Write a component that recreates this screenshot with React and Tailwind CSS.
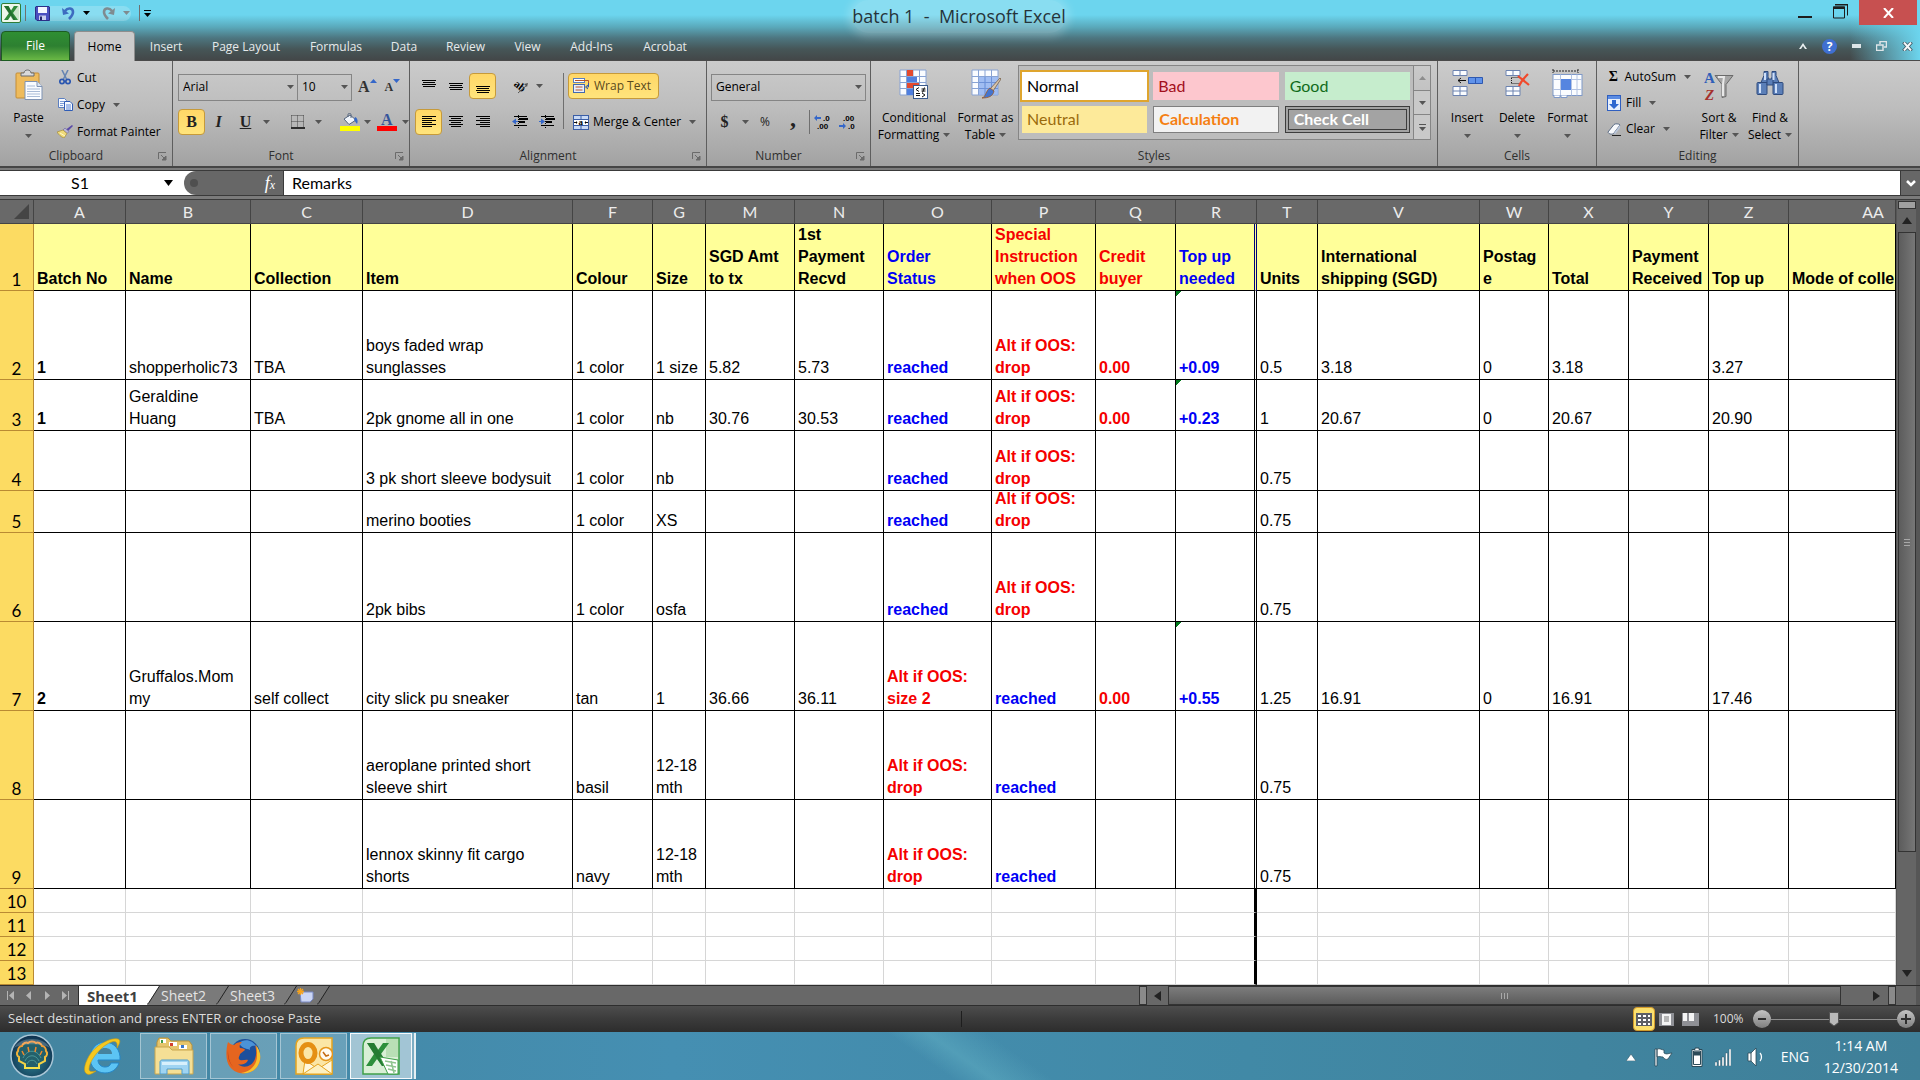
import React from "react";

const UI = "font-['Open_Sans','Noto_Sans',sans-serif]";

/* ---------- small shared pieces ---------- */

function Arrow({ className = "" }) {
  return (
    <svg width="7" height="4" viewBox="0 0 7 4" className={"shrink-0 " + className} aria-hidden="true">
      <path d="M0 0h7L3.500 4z" fill="currentColor" />
    </svg>
  );
}

function Sep({ className = "h-6" }) {
  return <div className={"w-px shrink-0 bg-[#6f6f6f] " + className} />;
}

function Group({ label, width, launcher, children }) {
  return (
    <section className={"flex shrink-0 flex-col border-r border-[#5e5e5e] " + width} aria-label={label}>
      <div className="flex h-[85px] min-w-0">{children}</div>
      <div className="flex h-5 items-center">
        <span className="flex-1 text-center text-xs text-[#2f2f2f]">{label}</span>
        {launcher && (
          <button aria-label={label + " settings"} className="flex w-5 justify-center text-[#6b6b6b]">
            <svg width="9" height="9" viewBox="0 0 9 9" aria-hidden="true">
              <path d="M.5 7V.5H8" stroke="currentColor" fill="none" />
              <path d="M3 3l5 5M8 4v4H4z" stroke="currentColor" fill="currentColor" />
            </svg>
          </button>
        )}
      </div>
    </section>
  );
}

function BigButton({ icon, lines, width, inlineArrow }) {
  return (
    <button className={"flex shrink-0 flex-col items-center pt-2 text-xs text-black " + width}>
      <span className="flex h-9 items-start justify-center">{icon}</span>
      <span className="mt-1 h-[17px] leading-[17px] whitespace-nowrap">{lines[0]}</span>
      {inlineArrow ? (
        <span className="flex h-[17px] items-center gap-1 leading-[17px] whitespace-nowrap">
          {lines[1]}
          <Arrow className="text-[#555]" />
        </span>
      ) : (
        <Arrow className="mt-2 text-[#555]" />
      )}
    </button>
  );
}

function SmallButton({ icon, label, arrow, className = "" }) {
  return (
    <button className={"flex items-center text-xs whitespace-nowrap text-black " + className}>
      <span className="mr-1 flex w-4 justify-center">{icon}</span>
      {label}
      {arrow && <Arrow className="ml-2 text-[#555]" />}
    </button>
  );
}

function IconButton({ label, active, width = "w-[27px]", children }) {
  return (
    <button
      aria-label={label}
      className={
        "flex h-[26px] shrink-0 items-center justify-center rounded-sm " +
        width +
        (active ? " border border-[#c69a3a] bg-[linear-gradient(#ffd767,#ffe47c)]" : "")
      }
    >
      {children}
    </button>
  );
}

function Combo({ label, value, width }) {
  return (
    <div className={"relative h-[27px] shrink-0 " + width}>
      <select
        aria-label={label}
        defaultValue={value}
        className="h-full w-full appearance-none border border-[#858585] bg-transparent px-1 text-xs text-black"
      >
        <option>{value}</option>
      </select>
      <Arrow className="pointer-events-none absolute top-3 right-1 text-[#555]" />
    </div>
  );
}

/* ---------- icons ---------- */

const ExcelMark = () => (
  <svg width="20" height="20" viewBox="0 0 20 20" aria-hidden="true">
    <rect x=".5" y=".5" width="19" height="19" rx="1.5" fill="#eef7ec" stroke="#2f7d38" />
    <path d="M12 3h6v14h-6z" fill="#cfe6cd" />
    <path d="M3 3h4.500l2.500 4.500L13 3h4l-5 7 5 7h-4.500L10 12.500 7 17H3l5-7z" fill="#2f8a3a" />
    <path d="M3 3h4.500l7 14H12z" fill="#1c5e28" opacity=".6" />
  </svg>
);
const SaveIcon = () => (
  <svg width="15" height="15" viewBox="0 0 15 15" aria-hidden="true">
    <path d="M1 .5h13l.5.5v13.500H2L.5 13V1z" fill="#4a4fc0" stroke="#2c2f86" />
    <path d="M3 1h9v6H3z" fill="#f4f6ff" />
    <path d="M4 9.500h7V14H4z" fill="#c9cdee" />
    <path d="M5 10.500h2V14H5z" fill="#23256b" />
  </svg>
);
const UndoIcon = ({ color, flip }) => (
  <svg width="13" height="14" viewBox="0 0 13 14" className={flip ? "-scale-x-100" : ""} aria-hidden="true">
    <path d="M3 5c3-4 8-3 8 1 0 3-2 5-4 7" fill="none" stroke={color} strokeWidth="2.600" />
    <path d="M0 2l1 7 6-1.500z" fill={color} />
  </svg>
);
const PasteIcon = () => (
  <svg width="28" height="32" viewBox="0 0 28 32" aria-hidden="true">
    <rect x="1" y="4" width="23" height="25" rx="1" fill="#eebb5c" stroke="#c38d37" />
    <path d="M6 7V4h3c0-4 7-4 7 0h3v3z" fill="#d9d9d9" stroke="#6b6b6b" />
    <path d="M10 12.500h12l5 5V30.500H10z" fill="#fafcff" stroke="#7f93b3" />
    <path d="M22 12.500v5h5" fill="#dbe5f3" stroke="#7f93b3" />
    <path d="M12 17h8M12 20h13M12 22.500h13M12 25h13M12 27.500h13" stroke="#a9bbd6" />
  </svg>
);
const CutIcon = () => (
  <svg width="12" height="15" viewBox="0 0 12 15" aria-hidden="true">
    <path d="M3 0l4.500 9M9 0L4.500 9" stroke="#6785b3" strokeWidth="1.600" />
    <circle cx="3" cy="11.500" r="2.200" fill="none" stroke="#2a56b0" strokeWidth="1.700" />
    <circle cx="9" cy="11.500" r="2.200" fill="none" stroke="#2a56b0" strokeWidth="1.700" />
  </svg>
);
const CopyIcon = () => (
  <svg width="15" height="13" viewBox="0 0 15 13" aria-hidden="true">
    <path d="M.5.5h6l2 2v7h-8z" fill="#f5f9ff" stroke="#5c7fc0" />
    <path d="M2 3.500h4M2 5.500h4M2 7.500h3" stroke="#7d9ed8" />
    <path d="M6.500 3.500h5.500l2.500 2.500v6.500h-8z" fill="#f5f9ff" stroke="#2f5cb5" />
    <path d="M8 7h5M8 9h5M8 11h5" stroke="#5c86d6" />
  </svg>
);
const BrushIcon = () => (
  <svg width="16" height="13" viewBox="0 0 16 13" aria-hidden="true">
    <path d="M15 0l1 1-5 5-2-1.500z" fill="#5a4aa8" />
    <path d="M8 3l4 3.500-2 2L6 5z" fill="#b9b6d8" stroke="#66609a" strokeWidth=".6" />
    <path d="M6 5l4 3.500L7 13C4 12 1.500 9.500 0 7z" fill="#f0db7a" stroke="#a48b3a" strokeWidth=".7" />
    <path d="M3 8l5 3" stroke="#fff8d0" />
  </svg>
);
const Lines = ({ rows }) => (
  <svg width="14" height="14" viewBox="0 0 14 14" aria-hidden="true">
    {rows.map(([x, y, w]) => (
      <rect key={y} x={x} y={y} width={w} height="1" fill="#000" />
    ))}
  </svg>
);
const vTop = [[0, 1, 14], [1, 3, 12], [0, 5, 14], [1, 7, 12]];
const vMid = [[0, 4, 14], [1, 6, 12], [0, 8, 14], [1, 10, 12]];
const vBot = [[0, 7, 14], [1, 9, 12], [0, 11, 14], [1, 13, 12]];
const aLeft = [[0, 1, 14], [0, 3, 10], [0, 5, 14], [0, 7, 10], [0, 9, 14], [0, 11, 10]];
const aMid = [[0, 1, 14], [2, 3, 10], [0, 5, 14], [2, 7, 10], [0, 9, 14], [2, 11, 10]];
const aRight = [[0, 1, 14], [4, 3, 10], [0, 5, 14], [4, 7, 10], [0, 9, 14], [4, 11, 10]];

const IndentIcon = ({ right }) => (
  <svg width="16" height="14" viewBox="0 0 16 14" aria-hidden="true">
    <path d="M2 1.500h13M7 4.500h9M7 7.500h6M2 10.500h13" stroke="#000" />
    <path d="M7 3.500h9M7 6.500h6" stroke="#000" />
    <path d="M6.500 0v14" stroke="#000" strokeDasharray="1 1" />
    {right ? <path d="M0 6h2V3.500L6 6.500 2 9.500V7H0z" fill="#3567c9" /> : <path d="M6 6H4V3.500L0 6.500 4 9.500V7h2z" fill="#3567c9" />}
  </svg>
);
const OrientIcon = () => (
  <svg width="17" height="15" viewBox="0 0 17 15" className="overflow-visible" aria-hidden="true">
    <text x="1" y="9" transform="rotate(38 5 8)" fontSize="11" fontWeight="bold" fontFamily="Liberation Serif, serif">ab</text>
    <path d="M6 14l9-8" stroke="#555" />
    <path d="M16 4l-4 1 3 3z" fill="#555" />
  </svg>
);
const WrapIcon = () => (
  <svg width="17" height="16" viewBox="0 0 17 16" aria-hidden="true">
    <rect x=".5" y=".5" width="11" height="4" fill="#fff" stroke="#5b7fc0" />
    <path d="M2 2.500h13.500v5" stroke="#b5552a" fill="none" />
    <path d="M15.500 5v4h-2M15 7l-2.500 2L15 11" stroke="#2d57a8" fill="none" />
    <rect x=".5" y="6.500" width="11" height="8" fill="#e8effb" stroke="#4469ad" />
    <path d="M2.500 9h7M2.500 12h7" stroke="#b5552a" />
  </svg>
);
const MergeIcon = () => (
  <svg width="16" height="15" viewBox="0 0 16 15" aria-hidden="true">
    <rect x=".5" y=".5" width="15" height="14" fill="#c9daf5" stroke="#3a5ea6" />
    <path d="M0 4.500h16M0 10.500h16M8 0v4M8 11v4" stroke="#3a5ea6" />
    <rect x="1" y="5" width="14" height="5" fill="#fff" />
    <text x="5.500" y="10" fontSize="9" fontWeight="bold" fontFamily="Liberation Serif, serif">a</text>
    <path d="M1 7.500h3M12 7.500h3" stroke="#111" />
    <path d="M4.500 7.500L3 6v3zM11.500 7.500L13 6v3z" />
  </svg>
);
const BorderIcon = () => (
  <svg width="14" height="14" viewBox="0 0 14 14" aria-hidden="true">
    <path d="M.5.500h12.500M.5 6.500h12.500M.5.500v12M6.500.500v12M12.500.500v12" stroke="#444" strokeDasharray="1 1" />
    <path d="M0 13h14" stroke="#000" strokeWidth="1.500" />
  </svg>
);
const FillIcon = () => (
  <svg width="20" height="18" viewBox="0 0 20 18" aria-hidden="true">
    <path d="M4 6l6-4 6 5-7 4.500z" fill="#f1f5fb" stroke="#54657e" />
    <path d="M8 4V1.500c0-1.500 3-1.500 3 0V5" fill="none" stroke="#54657e" />
    <path d="M15 4c3 1 3 5 2 7-1-1-2-3-3-4z" fill="#3768c4" />
    <rect y="13" width="20" height="5" fill="#ff0" />
  </svg>
);
const FontColorIcon = () => (
  <svg width="20" height="20" viewBox="0 -2 20 20" className="mb-0.5" aria-hidden="true">
    <text x="4" y="12" fontSize="16" fontWeight="bold" fill="#36559b" fontFamily="Liberation Serif, serif">A</text>
    <rect y="13" width="20" height="5" fill="#f00" />
  </svg>
);
const DecimalIcon = ({ up }) => (
  <svg width="17" height="15" viewBox="0 0 17 15" aria-hidden="true">
    <g fontSize="8" fontWeight="bold" fontFamily="Liberation Sans, sans-serif">
      <text x={up ? 9 : 4} y="6">{up ? ".0" : ".00"}</text>
      <text x={up ? 3 : 9} y="14">{up ? ".00" : ".0"}</text>
    </g>
    {up ? <path d="M0 3l3-3v2h4v2H3v2z" fill="#3567c9" /> : <path d="M7 11l-3-3v2H0v2h4v2z" fill="#3567c9" />}
  </svg>
);
const GridBase = ({ fill }) => (
  <>
    <rect x="1" y="1" width="26" height="25" fill={fill} />
    <path d="M1 1h26v25H1zM7.500 1v25M14 1v25M20.500 1v25M1 7.500h26M1 13.500h26M1 19.500h26" fill="none" stroke="#88a3d4" />
  </>
);
const CondIcon = () => (
  <svg width="30" height="30" viewBox="0 0 30 30" aria-hidden="true">
    <GridBase fill="#fafcff" />
    <path d="M8 1h6v6H8zM8 14h12v5H8z" fill="#e3492f" />
    <path d="M8 8h10v5H8zM8 20h6v6H8z" fill="#4f7fe0" />
    <rect x="14.500" y="16.500" width="14" height="13" fill="#fff" stroke="#3a5a8c" />
    <path d="M20 18.500l-3 2 3 2M17 24.500h4M17 26.500h4M22.500 20h4M22.500 22h4M25.500 18.500l-2 5M23 24l3 2-3 2" stroke="#111" fill="none" />
  </svg>
);
const TableIcon = () => (
  <svg width="30" height="30" viewBox="0 0 30 30" aria-hidden="true">
    <GridBase fill="#fafcff" />
    <path d="M8 8h19v18H8z" fill="#8fb2f0" opacity=".85" />
    <path d="M14 8v18M20.500 8v18M8 13.500h19M8 19.500h19" stroke="#6d92d8" />
    <path d="M29 9l1 1-8 12-3-2z" fill="#d8c6ae" stroke="#6b5238" strokeWidth=".7" />
    <path d="M19 19l4 3c-1 5-5 7-12 7 4-1 4-8 8-10z" fill="#4374cf" stroke="#a0581e" strokeWidth=".8" />
  </svg>
);
const InsertIcon = () => (
  <svg width="31" height="28" viewBox="0 0 31 28" aria-hidden="true">
    <path d="M1 1.500h14v5H1zM8 1.500v5M1 17.500h14v9H1zM8 17.500v9M1 22h14" fill="#fbfdff" stroke="#6c83b0" />
    <path d="M16.500 8.500h14v6h-14zM23.500 8.500v6" fill="#5f92ea" stroke="#2e58b0" />
    <path d="M6 11.500h8M9 9l-3 2.500L9 14" stroke="#111" fill="none" />
  </svg>
);
const DeleteIcon = () => (
  <svg width="25" height="28" viewBox="0 0 25 28" aria-hidden="true">
    <path d="M1 1.500h14v5H1zM8 1.500v5M1 17.500h14v9H1zM8 17.500v9M1 22h14" fill="#fbfdff" stroke="#6c83b0" />
    <path d="M6.500 8.500H15M6.500 14.500H15M6.500 9v5" stroke="#222" strokeDasharray="1 1" fill="none" />
    <path d="M13 7l11 9M23 5C19 9 16 12 14 17" stroke="#f0492c" strokeWidth="2.200" fill="none" />
  </svg>
);
const FormatIcon = () => (
  <svg width="31" height="30" viewBox="0 0 31 30" aria-hidden="true">
    <path d="M1 2h25M1 0v4M26 0v4" stroke="#222" strokeDasharray="2 1" />
    <rect x="1" y="5.500" width="29" height="21" fill="#fbfdff" stroke="#7f99c8" />
    <path d="M8.500 5.500v21M19.500 5.500v21M25 5.500v21M1 10.500h29M1 20.500h29" stroke="#b4c4e2" />
    <rect x="9" y="10" width="10" height="11" fill="#5585e0" />
    <path d="M2 26.500v2h6v-2M9 26.500v2h6v-2" stroke="#7f99c8" fill="#fff" />
  </svg>
);
const FillDownIcon = () => (
  <svg width="14" height="16" viewBox="0 0 14 16" aria-hidden="true">
    <rect x=".5" y=".5" width="13" height="15" fill="#e6effd" stroke="#2f5fc0" />
    <rect x="1" y="1" width="12" height="3" fill="#5a8be2" />
    <path d="M5 5h4v4h3l-5 5-5-5h3z" fill="#2e67cf" />
  </svg>
);
const EraserIcon = () => (
  <svg width="15" height="13" viewBox="0 0 15 13" aria-hidden="true">
    <path d="M1 9l6-7.500c1-1 5-1 6 .5L7 10c-1 2-6 1-6-1z" fill="#f7f9fc" stroke="#5b6c85" />
    <path d="M7 10l6-8v3L8 11.500z" fill="#b9c6da" />
    <path d="M5 12.500h9" stroke="#222" />
  </svg>
);
const SortIcon = () => (
  <svg width="30" height="36" viewBox="0 0 30 36" aria-hidden="true">
    <g fontSize="15" fontWeight="bold" fontFamily="Liberation Serif, serif">
      <text x="0" y="14" fill="#2f5fb8">A</text>
      <text x="1" y="31" fill="#a5302c" fontStyle="italic">Z</text>
    </g>
    <path d="M11 6.500h18l-7 9v12l-4 1V15.500z" fill="#a5a5a5" stroke="#6a6a6a" />
    <path d="M14 8h6l-1 7v12" fill="none" stroke="#e8e8e8" strokeWidth="2" />
  </svg>
);
const FindIcon = () => (
  <svg width="28" height="28" viewBox="0 0 28 28" aria-hidden="true">
    <g fill="#5b7fb8" stroke="#2e4a7d">
      <path d="M8 2.500h4v5l1 6H5l3-7z" />
      <path d="M16 2.500h4v4l3 7h-8l1-6z" />
      <rect x="1" y="13.500" width="10" height="12" rx="1" />
      <rect x="17" y="13.500" width="10" height="12" rx="1" />
      <path d="M11 10h6v6h-6z" />
    </g>
    <path d="M4 15v9M20 15v9M9 4v7M17.500 4v7" stroke="#cfe0fa" strokeWidth="2" />
  </svg>
);

/* ---------- title bar + tabs ---------- */

function TitleBar() {
  const tabs = [
    ["Insert", "w-[62px]"],
    ["Page Layout", "w-[98px]"],
    ["Formulas", "w-[82px]"],
    ["Data", "w-[54px]"],
    ["Review", "w-[69px]"],
    ["View", "w-[55px]"],
    ["Add-Ins", "w-[73px]"],
    ["Acrobat", "w-[74px]"],
  ];
  return (
    <header className="h-[61px] shrink-0 border-b border-[#4a4a4a] bg-[linear-gradient(to_right,transparent_calc(100%-70px),#6cd5ee_100%),linear-gradient(#6cd5ee_0,#6cd5ee_15px,#5aa9bb_27px,#4d7680_38px,#465658_49px,#434748_60px)]">
      <div className="flex h-[30px] items-start justify-between">
        <div className="flex h-[26px] flex-1 items-center pl-px">
          <ExcelMark />
          <Sep className="ml-1 h-4" />
          <div className="ml-2 flex items-center rounded-full bg-white/20 px-px">
            <button aria-label="Save"><SaveIcon /></button>
            <button aria-label="Undo" className="ml-3"><UndoIcon color="#3d6cc0" /></button>
            <Arrow className="ml-2 text-black" />
            <button aria-label="Redo" className="ml-3"><UndoIcon color="#7f8b90" flip /></button>
            <Arrow className="ml-2 text-[#7f8b90]" />
          </div>
          <Sep className="ml-2 h-4" />
          <button aria-label="Customize toolbar" className="ml-1">
            <svg width="7" height="7" viewBox="0 0 7 7" aria-hidden="true">
              <path d="M0 0h7v1H0zM0 3h7L3.500 7z" />
            </svg>
          </button>
        </div>
        <h1 className="rounded-full bg-white/20 text-lg leading-[33px] whitespace-pre text-[#26343a] shadow-[0_0_8px_4px_rgba(255,255,255,0.2)]">
          batch 1  -  Microsoft Excel
        </h1>
        <div className="flex flex-1 justify-end pr-[3px]">
          <button aria-label="Minimize" className="flex h-[25px] w-8 justify-center pt-4">
            <span className="h-0.5 w-[14px] bg-[#1d1d1d]" />
          </button>
          <button aria-label="Restore" className="flex h-[25px] w-[38px] justify-center pt-1">
            <svg width="15" height="15" viewBox="0 0 15 15" aria-hidden="true">
              <path d="M2.500.500h12v11M.5 3h11v11H.5z" fill="none" stroke="#1d1d1d" />
              <path d="M2 0h13v1.500H2zM0 2.500h12V5H0z" fill="#1d1d1d" />
            </svg>
          </button>
          <button aria-label="Close" className="flex h-[25px] w-[58px] items-center justify-center bg-[#c75050]">
            <svg width="11" height="10" viewBox="0 0 11 10" aria-hidden="true">
              <path d="M1 0l9 10M10 0L1 10" stroke="#fff" strokeWidth="2" />
            </svg>
          </button>
        </div>
      </div>
      <nav className="flex h-[31px] items-end text-xs text-[#e6eaeb]">
        <button className="mr-1 ml-px h-[30px] w-[69px] rounded-t-sm border border-[#1c5c22] bg-[linear-gradient(#2f8f33,#2d8031_50%,#6ab845)] text-white">
          File
        </button>
        <button className="h-[30px] w-[61px] rounded-t-sm border border-b-0 border-[#8e8e8e] bg-[#cbcbcb] text-black">Home</button>
        {tabs.map(([t, w]) => (
          <button key={t} className={"h-[29px] whitespace-nowrap " + w}>{t}</button>
        ))}
        <div className="flex h-[30px] flex-1 items-center justify-end gap-[15px] pr-[7px]">
          <button aria-label="Collapse ribbon">
            <svg width="8" height="6" viewBox="0 0 8 6" aria-hidden="true"><path d="M0 6l4-6 4 6H6L4 3 2 6z" fill="#e8eef0" /></svg>
          </button>
          <button aria-label="Help" className="h-[15px] w-[15px] rounded-full bg-[#3f6fd1] text-xs leading-[15px] font-bold text-white">?</button>
          <button aria-label="Minimize workbook" className="h-1 w-[9px] bg-[#dde5e8]" />
          <button aria-label="Restore workbook">
            <svg width="11" height="10" viewBox="0 0 11 10" aria-hidden="true">
              <path d="M4 .5h6.500V6H8M4 0v3M.5 4H7v5.500H.5z" fill="none" stroke="#dde5e8" strokeWidth="1.500" />
            </svg>
          </button>
          <button aria-label="Close workbook">
            <svg width="11" height="9" viewBox="0 0 11 9" aria-hidden="true">
              <path d="M1.500 0l8 9M9.500 0l-8 9" stroke="#3f5560" strokeWidth="3.500" />
              <path d="M2 .5l7 8M9 .5l-7 8" stroke="#f4f8fa" strokeWidth="2" />
            </svg>
          </button>
        </div>
      </nav>
    </header>
  );
}

/* ---------- ribbon ---------- */

const STYLE_CELLS = [
  ["Normal", "bg-white text-black outline-2 outline-[#dfa52e]"],
  ["Bad", "bg-[#fdc7ce] text-[#a3101c]"],
  ["Good", "bg-[#c6edcd] text-[#116b1b]"],
  ["Neutral", "bg-[#fdea9a] text-[#9a6a0c]"],
  ["Calculation", "border border-[#7f7f7f] bg-[#f2f2f2] font-bold text-[#f57f11]"],
  ["Check Cell", "border-4 border-double border-[#3d3d3d] bg-[#a3a3a3] px-[2px] font-bold text-white"],
];

function Ribbon() {
  return (
    <div className="flex h-[107px] shrink-0 border-b-2 border-[#454545] bg-[linear-gradient(#cbcbcb,#bdbdbd_45%,#a2a2a2)]">
      <Group label="Clipboard" width="w-[173px]" launcher>
        <BigButton width="w-[57px]" icon={<PasteIcon />} lines={["Paste"]} />
        <div className="flex flex-col pt-[3px]">
          <SmallButton className="h-[27px]" icon={<CutIcon />} label="Cut" />
          <SmallButton className="h-[27px]" icon={<CopyIcon />} label="Copy" arrow />
          <SmallButton className="h-[27px]" icon={<BrushIcon />} label="Format Painter" />
        </div>
      </Group>

      <Group label="Font" width="w-[237px]" launcher>
        <div className="flex flex-col gap-[9px] pt-3 pl-[5px]">
          <div className="flex items-center">
            <Combo label="Font" value="Arial" width="w-[120px]" />
            <Combo label="Font size" value="10" width="-ml-px w-[55px]" />
            <button aria-label="Grow font" className="ml-1.5 flex items-start font-['Liberation_Serif',serif] text-base leading-6 font-bold text-[#333]">
              A<Arrow className="mt-1 rotate-180 text-[#3567c9]" />
            </button>
            <button aria-label="Shrink font" className="ml-2 flex items-start font-['Liberation_Serif',serif] text-xs leading-6 font-bold text-[#333]">
              A<Arrow className="mt-1 text-[#3567c9]" />
            </button>
          </div>
          <div className="flex items-center font-['Liberation_Serif',serif] text-base font-bold text-[#222]">
            <IconButton label="Bold" active>B</IconButton>
            <IconButton label="Italic"><span className="italic">I</span></IconButton>
            <IconButton label="Underline"><span className="underline">U</span></IconButton>
            <Arrow className="ml-1 text-[#555]" />
            <Sep className="ml-2" />
            <IconButton label="Borders" width="ml-1 w-[30px]"><BorderIcon /></IconButton>
            <Arrow className="ml-0.5 text-[#555]" />
            <Sep className="ml-2" />
            <IconButton label="Fill color" width="ml-1 w-[29px]"><FillIcon /></IconButton>
            <Arrow className="text-[#555]" />
            <IconButton label="Font color" width="w-[31px]"><FontColorIcon /></IconButton>
            <Arrow className="text-[#555]" />
          </div>
        </div>
      </Group>

      <Group label="Alignment" width="w-[297px]" launcher>
        <div className="flex flex-col gap-[10px] pt-3 pl-[5px]">
          <div className="flex items-center">
            <IconButton label="Top align"><Lines rows={vTop} /></IconButton>
            <IconButton label="Middle align"><Lines rows={vMid} /></IconButton>
            <IconButton label="Bottom align" active><Lines rows={vBot} /></IconButton>
            <Sep className="ml-1" />
            <IconButton label="Orientation" width="ml-1 w-[31px]"><OrientIcon /></IconButton>
            <Arrow className="text-[#555]" />
          </div>
          <div className="flex items-center">
            <IconButton label="Align left" active><Lines rows={aLeft} /></IconButton>
            <IconButton label="Align center"><Lines rows={aMid} /></IconButton>
            <IconButton label="Align right"><Lines rows={aRight} /></IconButton>
            <Sep className="ml-1" />
            <IconButton label="Decrease indent" width="ml-1 w-[30px]"><IndentIcon /></IconButton>
            <IconButton label="Increase indent" width="w-6"><IndentIcon right /></IconButton>
          </div>
        </div>
        <Sep className="mt-3 ml-1 h-14" />
        <div className="flex flex-col gap-[10px] pt-3 pl-1">
          <button className="flex h-[26px] w-[91px] items-center rounded-sm border border-[#c69a3a] bg-[linear-gradient(#ffd767,#ffe47c)] pl-1 text-xs whitespace-nowrap text-[#5a4a1c]">
            <WrapIcon />
            <span className="ml-1">Wrap Text</span>
          </button>
          <button className="flex h-[26px] items-center pl-[5px] text-xs whitespace-nowrap text-black">
            <MergeIcon />
            <span className="ml-1">Merge &amp; Center</span>
            <Arrow className="ml-2 text-[#555]" />
          </button>
        </div>
      </Group>

      <Group label="Number" width="w-[164px]" launcher>
        <div className="flex flex-col gap-[9px] pt-3 pl-1">
          <Combo label="Number format" value="General" width="w-[155px]" />
          <div className="flex items-center text-[#222]">
            <IconButton label="Currency"><span className="font-['Liberation_Serif',serif] text-base font-bold">$</span></IconButton>
            <Arrow className="ml-1 text-[#555]" />
            <IconButton label="Percent" width="ml-1 w-6"><span className="text-xs">%</span></IconButton>
            <IconButton label="Comma" width="w-8"><span className="pb-2 font-['Liberation_Serif',serif] text-2xl leading-4 font-bold">,</span></IconButton>
            <Sep />
            <IconButton label="Increase decimal" width="ml-1"><DecimalIcon up /></IconButton>
            <IconButton label="Decrease decimal" width="ml-2"><DecimalIcon /></IconButton>
          </div>
        </div>
      </Group>

      <Group label="Styles" width="w-[567px]">
        <BigButton width="w-[86px]" icon={<CondIcon />} lines={["Conditional", "Formatting"]} inlineArrow />
        <BigButton width="w-[57px]" icon={<TableIcon />} lines={["Format as", "Table"]} inlineArrow />
        <div className="mt-1 ml-1 flex h-[75px]">
          <div className="grid w-[396px] grid-cols-3 grid-rows-2 gap-x-[6px] gap-y-[6px] border border-[#858585] bg-[#bdbdbd] px-[3px] py-[6px]">
            {STYLE_CELLS.map(([name, cls]) => (
              <button key={name} className={"flex items-center px-[5px] font-['Lato','Open_Sans',sans-serif] text-base " + cls}>{name}</button>
            ))}
          </div>
          <div className="flex w-[17px] flex-col border border-l-0 border-[#858585] text-[#555]">
            <button aria-label="Scroll styles up" className="flex flex-1 items-center justify-center text-[#8d8d8d]"><Arrow className="rotate-180" /></button>
            <button aria-label="Scroll styles down" className="flex flex-1 items-center justify-center border-t border-[#858585] bg-[#c9c9c9]"><Arrow /></button>
            <button aria-label="More styles" className="flex flex-1 flex-col items-center justify-center gap-0.5 border-t border-[#858585] bg-[#c9c9c9]">
              <span className="h-px w-[7px] bg-[#555]" />
              <Arrow />
            </button>
          </div>
        </div>
      </Group>

      <Group label="Cells" width="w-[159px]">
        <div className="flex pl-1">
          <BigButton width="w-[50px]" icon={<InsertIcon />} lines={["Insert"]} />
          <BigButton width="w-[50px]" icon={<DeleteIcon />} lines={["Delete"]} />
          <BigButton width="w-[51px]" icon={<FormatIcon />} lines={["Format"]} />
        </div>
      </Group>

      <Group label="Editing" width="w-[202px]">
        <div className="flex w-[94px] flex-col pt-[3px] pl-[9px]">
          <SmallButton className="h-[26px]" icon={<span className="font-['Liberation_Serif',serif] text-sm font-bold">Σ</span>} label="AutoSum" arrow />
          <SmallButton className="h-[26px]" icon={<FillDownIcon />} label="Fill" arrow />
          <SmallButton className="h-[26px]" icon={<EraserIcon />} label="Clear" arrow />
        </div>
        <BigButton width="w-[56px]" icon={<SortIcon />} lines={["Sort &", "Filter"]} inlineArrow />
        <BigButton width="w-[46px]" icon={<FindIcon />} lines={["Find &", "Select"]} inlineArrow />
      </Group>
    </div>
  );
}

function FormulaBar() {
  return (
    <div className="flex h-8 shrink-0 flex-col bg-[#7b7b7b] pt-0.5 text-base">
      <div className="flex h-[26px] border-y border-[#3a3a3a] bg-[#676767] font-['Lato','Open_Sans',sans-serif]">
        <div className="flex w-[184px] items-center bg-white pr-2">
          <input aria-label="Name box" defaultValue="S1" className="w-[160px] min-w-0 bg-transparent text-center text-black outline-none" />
          <svg width="9" height="6" viewBox="0 0 9 6" className="ml-1" aria-hidden="true"><path d="M0 0h9L4.500 6z" /></svg>
        </div>
        <div className="flex w-[99px] bg-white">
          <div className="flex w-full items-center justify-between rounded-l-full bg-[#676767] pr-2 pl-1.5">
            <span className="h-2 w-2 rounded-full bg-[#4f4f4f]" />
            <button aria-label="Insert function" className="font-['Liberation_Serif',serif] text-lg leading-5 text-white italic">
              f<span className="text-xs">x</span>
            </button>
          </div>
        </div>
        <input aria-label="Formula" defaultValue="Remarks" className="min-w-0 flex-1 border-l border-[#3a3a3a] bg-white px-2 text-black outline-none" />
        <button aria-label="Expand formula bar" className="flex w-5 items-center justify-center border-l border-[#3a3a3a]">
          <svg width="10" height="7" viewBox="0 0 10 7" aria-hidden="true"><path d="M1 1l4 4 4-4" fill="none" stroke="#fff" strokeWidth="2.500" /></svg>
        </button>
      </div>
      <div className="mt-[3px] h-px bg-[#3a3a3a]" />
    </div>
  );
}

/* ---------- worksheet ---------- */

const COLS = [
  ["A", "w-[92px]"], ["B", "w-[125px]"], ["C", "w-[112px]"], ["D", "w-[210px]"], ["F", "w-[80px]"],
  ["G", "w-[53px]"], ["M", "w-[89px]"], ["N", "w-[89px]"], ["O", "w-[108px]"], ["P", "w-[104px]"],
  ["Q", "w-[80px]"], ["R", "w-[81px]"], ["T", "w-[61px]"], ["V", "w-[162px]"], ["W", "w-[69px]"],
  ["X", "w-[80px]"], ["Y", "w-[80px]"], ["Z", "w-[80px]"], ["AA", ""],
];

const K = "text-black";
const BLUE = "font-bold text-[#0000f5]";
const RED = "font-bold text-[#f50000]";
const DROP = ["Alt if OOS:\ndrop", RED];
const OK = ["reached", BLUE];

const ROWS = [
  {
    h: "h-[66px]",
    head: true,
    cells: {
      A: ["Batch No", K], B: ["Name", K], C: ["Collection", K], D: ["Item", K], F: ["Colour", K], G: ["Size", K],
      M: ["SGD Amt\nto tx", K], N: ["1st\nPayment\nRecvd", K], O: ["Order\nStatus", BLUE],
      P: ["Special\nInstruction\nwhen OOS", RED], Q: ["Credit\nbuyer", RED], R: ["Top up\nneeded", BLUE],
      T: ["Units", K], V: ["International\nshipping (SGD)", K], W: ["Postag\ne", K], X: ["Total", K],
      Y: ["Payment\nReceived", K], Z: ["Top up", K], AA: ["Mode of colle", K],
    },
  },
  {
    h: "h-[88px]",
    flag: true,
    cells: {
      A: ["1", "font-bold"], B: ["shopperholic73", K], C: ["TBA", K], D: ["boys faded wrap\nsunglasses", K], F: ["1 color", K],
      G: ["1 size", K], M: ["5.82", K], N: ["5.73", K], O: OK, P: DROP, Q: ["0.00", RED], R: ["+0.09", BLUE],
      T: ["0.5", K], V: ["3.18", K], W: ["0", K], X: ["3.18", K], Z: ["3.27", K],
    },
  },
  {
    h: "h-[50px]",
    flag: true,
    cells: {
      A: ["1", "font-bold"], B: ["Geraldine\nHuang", K], C: ["TBA", K], D: ["2pk gnome all in one", K], F: ["1 color", K],
      G: ["nb", K], M: ["30.76", K], N: ["30.53", K], O: OK, P: DROP, Q: ["0.00", RED], R: ["+0.23", BLUE],
      T: ["1", K], V: ["20.67", K], W: ["0", K], X: ["20.67", K], Z: ["20.90", K],
    },
  },
  { h: "h-[59px]", cells: { D: ["3 pk short sleeve bodysuit", K], F: ["1 color", K], G: ["nb", K], O: OK, P: DROP, T: ["0.75", K] } },
  { h: "h-[41px]", cells: { D: ["merino booties", K], F: ["1 color", K], G: ["XS", K], O: OK, P: DROP, T: ["0.75", K] } },
  { h: "h-[88px]", cells: { D: ["2pk bibs", K], F: ["1 color", K], G: ["osfa", K], O: OK, P: DROP, T: ["0.75", K] } },
  {
    h: "h-[88px]",
    flag: true,
    cells: {
      A: ["2", "font-bold"], B: ["Gruffalos.Mom\nmy", K], C: ["self collect", K], D: ["city slick pu sneaker", K], F: ["tan", K],
      G: ["1", K], M: ["36.66", K], N: ["36.11", K], O: ["Alt if OOS:\nsize 2", RED], P: OK, Q: ["0.00", RED], R: ["+0.55", BLUE],
      T: ["1.25", K], V: ["16.91", K], W: ["0", K], X: ["16.91", K], Z: ["17.46", K],
    },
  },
  { h: "h-[88px]", cells: { D: ["aeroplane printed short\nsleeve shirt", K], F: ["basil", K], G: ["12-18\nmth", K], O: DROP, P: OK, T: ["0.75", K] } },
  { h: "h-[88px]", cells: { D: ["lennox skinny fit cargo\nshorts", K], F: ["navy", K], G: ["12-18\nmth", K], O: DROP, P: OK, T: ["0.75", K] } },
  { h: "h-[23px]", blank: true, cells: {} },
  { h: "h-[23px]", blank: true, cells: {} },
  { h: "h-[23px]", blank: true, cells: {} },
  { h: "h-[23px]", blank: true, cells: {} },
];

function cellBorder(row, col) {
  if (row.blank) return col === "R" ? "border-b border-b-[#d6d6d6] border-r-3 border-r-black" : "border-r border-b border-[#d6d6d6]";
  if (col === "R") return row.head ? "border-b border-b-black border-r-3 border-double border-r-[#00007a]" : "border-b border-r-3 border-double border-black";
  return "border-r border-b border-black";
}

function Sheet() {
  return (
    <div className="flex min-h-0 flex-1 bg-white">
      <div className="min-w-0 flex-1 overflow-hidden">
        <table className="w-full table-fixed border-separate border-spacing-0">
          <colgroup>
            <col className="w-[34px]" />
            {COLS.map(([c, w]) => <col key={c} className={w} />)}
          </colgroup>
          <thead>
            <tr className="bg-[#696969] font-['Lato','Open_Sans',sans-serif] text-base text-[#ececec]">
              <th className="h-6 border-r border-b border-[#444] p-0" aria-label="Select all">
                <svg width="15" height="15" viewBox="0 0 15 15" className="mr-1 ml-auto" aria-hidden="true"><path d="M15 0v15H0z" fill="#454545" /></svg>
              </th>
              {COLS.map(([c]) => (
                <th key={c} className={"h-6 border-r border-b border-[#444] p-0 leading-[23px] font-normal " + (c === "AA" ? "pl-[62px]" : "")}>
                  {c}
                </th>
              ))}
            </tr>
          </thead>
          <tbody>
            {ROWS.map((row, i) => (
              <tr key={i} className={row.head ? "bg-[#ffff99] font-bold" : "bg-white"}>
                <th className="border-r border-b border-[#b98a33] bg-[#fcdb62] p-0 align-bottom font-['Lato','Open_Sans',sans-serif] text-[17px] leading-[21px] font-normal text-black">
                  {i + 1}
                </th>
                {COLS.map(([c]) => {
                  const cell = row.cells[c];
                  return (
                    <td key={c} className={"p-0 " + cellBorder(row, c)}>
                      <div className={"relative flex flex-col justify-end overflow-hidden pl-[3px] font-['Liberation_Sans',Arial,sans-serif] text-base leading-[22px] whitespace-pre " + row.h + " " + (cell ? cell[1] : "")}>
                        {row.flag && c === "R" && (
                          <span className="absolute top-0 left-0 h-1.5 w-1.5 bg-[linear-gradient(135deg,#007a1c_50%,transparent_50%)]" />
                        )}
                        {cell && <span>{cell[0]}</span>}
                      </div>
                    </td>
                  );
                })}
              </tr>
            ))}
          </tbody>
        </table>
      </div>
      <div className="flex w-6 shrink-0 flex-col items-center border-r-4 border-l border-[#565656] bg-[#656565] pt-px">
        <div className="h-2 w-[18px] border border-[#333] bg-[#a0a0a0]" />
        <svg width="10" height="7" viewBox="0 0 10 7" className="my-2" aria-hidden="true"><path d="M0 7h10L5 0z" fill="#222" /></svg>
        <div className="flex min-h-0 w-[18px] flex-[620] items-center justify-center border border-[#333] bg-[linear-gradient(to_right,#5c5c5c,#777)]">
          <div className="flex flex-col gap-0.5">
            <span className="h-px w-1.5 bg-[#a8a8a8]" />
            <span className="h-px w-1.5 bg-[#a8a8a8]" />
            <span className="h-px w-1.5 bg-[#a8a8a8]" />
          </div>
        </div>
        <div className="flex-[118]" />
        <svg width="10" height="7" viewBox="0 0 10 7" className="mb-2" aria-hidden="true"><path d="M0 0h10L5 7z" fill="#222" /></svg>
      </div>
    </div>
  );
}

/* ---------- sheet tabs ---------- */

function Slant({ left, right }) {
  return (
    <svg width="13" height="19" viewBox="0 0 13 19" className="shrink-0" aria-hidden="true">
      <path d="M0 0h13v19H0z" fill={right} />
      <path d="M0 0h12.500L0 19z" fill={left} />
      <path d="M12.500 0L2 16.500l-2 2" stroke="#222" fill="none" />
    </svg>
  );
}

function NavMark({ d, label }) {
  return (
    <button aria-label={label} className="flex w-[18px] justify-center">
      <svg width="8" height="9" viewBox="0 0 8 9" aria-hidden="true"><path d={d} fill="#b4b4b4" /></svg>
    </button>
  );
}

function TabBar() {
  return (
    <div className="flex h-[21px] shrink-0 items-start border-t border-b border-[#2e2e2e] bg-[#686868]">
      <div className="flex h-[19px] w-[79px] items-center border-r border-[#2e2e2e] pl-0.5">
        <NavMark label="First sheet" d="M0 0h1v9H0zM7 0v9L2 4.500z" />
        <NavMark label="Previous sheet" d="M6 0v9L1 4.500z" />
        <NavMark label="Next sheet" d="M2 0v9l5-4.500z" />
        <NavMark label="Last sheet" d="M7 0h1v9H7zM1 0v9l5-4.500z" />
      </div>
      <button className="h-[19px] w-[68px] bg-white pl-2 text-left text-[15px] leading-[18px] font-bold whitespace-nowrap text-[#3f3f3f]">Sheet1</button>
      <Slant left="#fff" right="#7a7a7a" />
      <button className="h-[19px] w-[56px] bg-[#7a7a7a] pl-px text-left text-sm leading-[18px] text-[#e4e4e4]">Sheet2</button>
      <Slant left="#7a7a7a" right="#7a7a7a" />
      <button className="h-[19px] w-[55px] bg-[#7a7a7a] pl-px text-left text-sm leading-[18px] text-[#e4e4e4]">Sheet3</button>
      <Slant left="#7a7a7a" right="#747474" />
      <button aria-label="Insert worksheet" className="h-[19px] w-5 bg-[#747474]">
        <svg width="17" height="15" viewBox="0 0 17 15" aria-hidden="true">
          <path d="M3 4h13v7l-3 3H4z" fill="#ccd6f4" stroke="#7889c4" />
          <path d="M3.500 0v7M0 3.500h7M1 1l5 5M6 1L1 6" stroke="#f5a21c" strokeWidth="1.300" />
        </svg>
      </button>
      <Slant left="#747474" right="#686868" />
      <div className="flex h-[19px] min-w-0 flex-1 justify-end">
        <div className="flex w-[62%] max-w-[781px] min-w-0 items-center">
          <div className="h-[19px] w-2 shrink-0 border border-[#333] bg-[#8a8a8a]" />
          <svg width="7" height="10" viewBox="0 0 7 10" className="mx-[7px] shrink-0" aria-hidden="true"><path d="M7 0v10L0 5z" fill="#222" /></svg>
          <div className="flex h-[19px] min-w-0 flex-1 items-center justify-center gap-0.5 border border-[#333] bg-[linear-gradient(#7c7c7c,#5c5c5c)]">
            <span className="h-1.5 w-px bg-[#a8a8a8]" />
            <span className="h-1.5 w-px bg-[#a8a8a8]" />
            <span className="h-1.5 w-px bg-[#a8a8a8]" />
          </div>
          <svg width="7" height="10" viewBox="0 0 7 10" className="mr-2 ml-8 shrink-0" aria-hidden="true"><path d="M0 0v10l7-5z" fill="#222" /></svg>
          <div className="h-[19px] w-2 shrink-0 border border-[#333] bg-[#8a8a8a]" />
          <div className="h-[19px] w-6 shrink-0 border-r-4 border-[#565656]" />
        </div>
      </div>
    </div>
  );
}

function StatusBar() {
  return (
    <div className="flex h-[26px] shrink-0 items-center bg-[linear-gradient(#4d4d4d,#3b3b3b_50%,#2d2d2d)] pl-2 text-[13px] text-[#dcdcdc]">
      <span className="flex-1">Select destination and press ENTER or choose Paste</span>
      <span className="h-4 w-px bg-[#1e1e1e]" />
      <div className="flex flex-1 items-center justify-end pr-[5px]">
        <button aria-label="Normal view" className="flex h-6 w-[22px] items-center justify-center rounded-sm border border-[#d19a2a] bg-[#fbe06e]">
          <svg width="16" height="13" viewBox="0 0 16 13" aria-hidden="true">
            <rect width="16" height="13" fill="#5c5f66" />
            <path d="M2 2h3v2H2zM7 2h3v2H7zM12 2h2v2h-2zM2 6h3v2H2zM7 6h3v2H7zM12 6h2v2h-2zM2 10h3v2H2zM7 10h3v2H7zM12 10h2v2h-2z" fill="#fff" />
          </svg>
        </button>
        <button aria-label="Page layout view" className="ml-1">
          <svg width="15" height="13" viewBox="0 0 15 13" aria-hidden="true">
            <rect width="15" height="13" fill="#8f9095" />
            <path d="M3 1h9v11H3z" fill="#f4f4f4" />
            <path d="M5 4h5M5 6h5M5 8h5" stroke="#777" />
          </svg>
        </button>
        <button aria-label="Page break preview" className="ml-2">
          <svg width="17" height="13" viewBox="0 0 17 13" aria-hidden="true">
            <rect width="17" height="13" fill="#8f9095" />
            <path d="M1 0h4v8H1zM7 0h5v8H7z" fill="#f4f4f4" />
          </svg>
        </button>
        <span className="ml-[14px] w-8 text-xs">100%</span>
        <button aria-label="Zoom out" className="ml-2 flex h-[18px] w-[18px] items-center justify-center rounded-full bg-[linear-gradient(#c4c4c4,#7e7e7e)]">
          <span className="h-0.5 w-2 bg-[#2e2e2e]" />
        </button>
        <div className="relative flex h-5 w-[126px] items-center justify-center">
          <span className="h-px w-full bg-[#8e8e8e]" />
          <input type="range" aria-label="Zoom" defaultValue="50" className="absolute inset-0 w-full opacity-0" />
          <svg width="10" height="15" viewBox="0 0 10 15" className="pointer-events-none absolute" aria-hidden="true">
            <path d="M.5.500h9v10L5 14 .5 10.500z" fill="#b9b9b9" stroke="#555" />
          </svg>
        </div>
        <button aria-label="Zoom in" className="flex h-[18px] w-[18px] items-center justify-center rounded-full bg-[linear-gradient(#c4c4c4,#7e7e7e)]">
          <svg width="10" height="10" viewBox="0 0 10 10" aria-hidden="true"><path d="M0 5h10M5 0v10" stroke="#2e2e2e" strokeWidth="2" /></svg>
        </button>
      </div>
    </div>
  );
}

/* ---------- taskbar ---------- */

const ShellIcon = () => (
  <svg width="44" height="44" viewBox="0 0 44 44" aria-hidden="true">
    <defs>
      <radialGradient id="orb" cx=".5" cy=".6" r=".6">
        <stop offset="0" stopColor="#2f8494" />
        <stop offset="1" stopColor="#0e2f4d" />
      </radialGradient>
      <linearGradient id="shell" x1="0" y1="0" x2="0" y2="1">
        <stop offset="0" stopColor="#f08a2c" />
        <stop offset="1" stopColor="#f4e24a" />
      </linearGradient>
    </defs>
    <circle cx="22" cy="22" r="21" fill="url(#orb)" stroke="#a9c6d6" strokeWidth="1.500" />
    <path d="M15 34v-4l-6-3v-4c-2-1-3-4-1-6 0-3 2-5 4-5 1-3 4-4 6-3 2-2 6-2 8 0 2-1 5 0 6 3 2 0 4 2 4 5 2 2 1 5-1 6v4l-6 3v4z" fill="#23606b" stroke="url(#shell)" strokeWidth="2" />
    <path d="M13 24c4-9 14-9 18 0M15 27c3-7 11-7 14 0M17 30c2-5 8-5 10 0" stroke="#4f9b9b" fill="none" opacity=".9" />
    <path d="M12 17l2 4M18 13l1 5M26 13l-1 5M32 17l-2 4" stroke="#f08a2c" strokeWidth="1.500" />
    <path d="M4 14c6-12 30-12 36 0-8-5-28-5-36 0z" fill="#fff" opacity=".22" />
  </svg>
);
const IEIcon = () => (
  <svg width="38" height="38" viewBox="0 0 38 38" aria-hidden="true">
    <path d="M36 26c-2 6-7 10-14 10C13 36 7 29 7 21S13 5 22 5s16 8 15 18H15c0 4 3 7 7 7 3 0 5-1 6-4z" fill="#5cc4f4" stroke="#2487c8" />
    <path d="M15 17h14c0-4-3-6-7-6s-7 2-7 6z" fill="#45829f" />
    <path d="M34 11c3-5 4-8 1-9C28 0 12 8 6 19 1 28 0 35 4 37c2 1 5 0 9-3-4 1-7 1-7-2C6 25 15 12 26 6c6-3 9-2 8 5z" fill="#f6c81f" stroke="#c99a12" strokeWidth=".6" />
  </svg>
);
const FolderIcon = () => (
  <svg width="40" height="38" viewBox="0 0 40 38" aria-hidden="true">
    <path d="M3 5l2-4h9l3 3h18l3 4v28H2z" fill="#e6c56c" stroke="#b8923c" />
    <path d="M6 2h6v4H6z" fill="#fff" /><path d="M7 3h2v3H7z" fill="#3b9b46" />
    <path d="M15 5h8v4h-8z" fill="#fff" /><path d="M16 6h3v3h-3z" fill="#d5402f" />
    <path d="M25 8h8v4h-8z" fill="#fff" /><path d="M27 8h3v3h-3z" fill="#3b76c8" />
    <path d="M1 10h14l3 3h21v24H1z" fill="#f5df95" stroke="#c9a64f" />
    <path d="M6 37V25c0-1 1-2 2-2h25c1 0 2 1 2 2v12h-7v-5H13v5z" fill="#9fd4f2" stroke="#4e9ccc" />
    <path d="M8 25h25v3H8z" fill="#d8f0fc" />
  </svg>
);
const FirefoxIcon = () => (
  <svg width="38" height="38" viewBox="0 0 38 38" aria-hidden="true">
    <circle cx="20" cy="17" r="15" fill="#1c4f9c" />
    <path d="M14 6c5-5 14-3 17 3-4-1-7 1-6 4-4-2-8-1-11-7z" fill="#4b93d8" />
    <path d="M3 5c2 2 4 3 6 3 3-3 6-3 8-3-2 2-3 4-2 6 3 0 5 1 5 2l-5 4c0 2-2 3-1 5 2 3 6 0 9 1-2 5-8 5-10 4 5 5 14 3 17-5 2-6 1-10 0-14 6 6 7 16 2 22-6 8-20 9-27 0C0 24 1 12 3 5z" fill="#e5651f" />
    <path d="M31 8c5 6 6 15 1 22-4 5-10 7-16 6 9-1 16-8 16-17 0-4 0-8-1-11z" fill="#f7c12e" />
    <path d="M3 13c-1 8 2 16 9 20C5 29 3 21 3 13z" fill="#b33014" />
  </svg>
);
const OutlookIcon = () => (
  <svg width="38" height="38" viewBox="0 0 38 38" aria-hidden="true">
    <path d="M1 9c0-5 3-8 8-8h28v36H1z" fill="#fbe6a6" stroke="#e5a41f" strokeWidth="1.500" />
    <path d="M10 23l13 9 14-9v14H8z" fill="#fff7dc" stroke="#e5a41f" />
    <path d="M8 37l15-10 14 10z" fill="#fdf0c0" stroke="#e5a41f" />
    <ellipse cx="13" cy="16" rx="7" ry="8.500" fill="none" stroke="#e58f12" strokeWidth="5" />
    <circle cx="31" cy="17" r="6.500" fill="#fffaf0" stroke="#e5951b" strokeWidth="1.500" />
    <path d="M28 15l3 4 3-1" stroke="#c46a12" fill="none" strokeWidth="1.500" />
  </svg>
);
const ExcelIcon = () => (
  <svg width="38" height="38" viewBox="0 0 38 38" aria-hidden="true">
    <path d="M1 9c0-5 3-8 8-8h28v36H1z" fill="#d9efd6" stroke="#3fa048" strokeWidth="1.500" />
    <path d="M24 2h12v18H24z" fill="#b9dfb6" />
    <path d="M5 6h7l4 7 5-7h6l-8 11 8 12h-7l-5-7-5 7H4l8-12z" fill="#2d8f3c" />
    <path d="M5 6h7l15 23h-7z" fill="#1f6e2d" opacity=".6" />
    <path d="M18 20l18 3v14H26z" fill="#fff" stroke="#3fa048" />
    <path d="M23 24l11 2M24 28l10 2M26 32l8 2M29 24l3 12" stroke="#8fc48f" strokeWidth="1.500" />
  </svg>
);

function TaskButton({ label, children }) {
  return (
    <button aria-label={label} className="mr-[3px] flex h-[46px] w-[67px] items-center justify-center border border-white/40 bg-white/20">
      {children}
    </button>
  );
}

function Taskbar() {
  return (
    <footer className="flex h-12 shrink-0 items-center justify-between bg-[linear-gradient(35deg,transparent_48%,rgba(110,190,205,0.35)_50%,transparent_53%),linear-gradient(to_right,#43849f,#458fb2_35%,#4189a6_65%,#3f7f98)] text-sm text-white">
      <div className="flex items-center">
        <button aria-label="Start" className="ml-[10px] flex w-[73px]"><ShellIcon /></button>
        <button aria-label="Internet Explorer" className="flex w-[57px]"><IEIcon /></button>
        <TaskButton label="File Explorer"><FolderIcon /></TaskButton>
        <TaskButton label="Firefox"><FirefoxIcon /></TaskButton>
        <TaskButton label="Outlook"><OutlookIcon /></TaskButton>
        <div className="flex">
          <button aria-label="Excel" className="flex h-[46px] w-[62px] items-center justify-center border border-white/90 bg-white/50">
            <ExcelIcon />
          </button>
          <span className="h-[46px] w-1 border-r-2 border-white/80 bg-white/30" />
        </div>
      </div>
      <div className="flex items-center pt-0.5 pr-[22px]">
        <button aria-label="Show hidden icons">
          <svg width="10" height="7" viewBox="0 0 10 7" aria-hidden="true"><path d="M0 7h10L5 0z" fill="#fff" stroke="#2c5566" strokeWidth=".6" /></svg>
        </button>
        <svg width="19" height="19" viewBox="0 0 19 19" className="ml-[18px]" aria-hidden="true">
          <path d="M1 1h2v17H1zM3 1c3-1 5 1 7 1v3c3 2 5 0 8 0l-4 6c-2 1-4 0-5-2-2 0-4-1-6 0z" fill="#fff" stroke="#2c4a58" strokeWidth=".8" />
        </svg>
        <svg width="12" height="20" viewBox="0 0 12 20" className="ml-[18px]" aria-hidden="true">
          <path d="M4 1h4v1.500h3v17H1v-17h3z" fill="#fff" stroke="#2c4a58" />
          <path d="M3 4.500h6v4H3z" fill="#2c4a58" />
          <path d="M2.500 4v13.500h7V4z" stroke="#2c4a58" fill="none" />
        </svg>
        <svg width="16" height="17" viewBox="0 0 16 17" className="ml-3" aria-hidden="true">
          <path d="M0 13h2v4H0zM3.500 11h2v6h-2zM7 8h2v9H7zM10.500 4h2v13h-2zM14 0h2v17h-2z" fill="#fff" stroke="#2c4a58" strokeWidth=".4" />
        </svg>
        <svg width="18" height="20" viewBox="0 0 18 20" className="ml-4" aria-hidden="true">
          <path d="M1 6h3l5-5v18l-5-5H1z" fill="#fff" stroke="#2c4a58" strokeWidth=".8" />
          <path d="M4 6v8" stroke="#2c4a58" />
          <path d="M13 6c2 2 2 6 0 8" fill="none" stroke="#fff" strokeWidth="1.300" />
        </svg>
        <span className="ml-4 w-[31px]">ENG</span>
        <div className="ml-3 text-center leading-[22px]">
          <div>1:14 AM</div>
          <div>12/30/2014</div>
        </div>
      </div>
    </footer>
  );
}

export default function App() {
  return (
    <div className={"flex h-screen w-full flex-col overflow-hidden " + UI}>
      <TitleBar />
      <Ribbon />
      <FormulaBar />
      <Sheet />
      <TabBar />
      <StatusBar />
      <Taskbar />
    </div>
  );
}
